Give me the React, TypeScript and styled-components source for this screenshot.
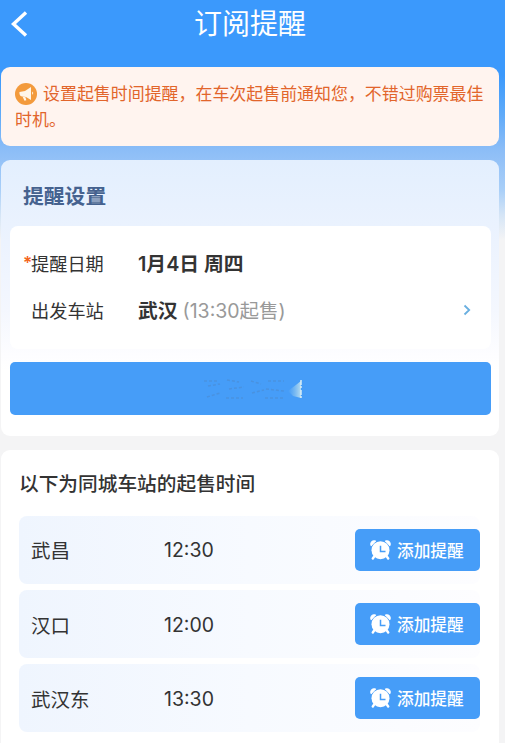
import React from "react";
import styled, { createGlobalStyle } from "styled-components";

const GlobalStyle = createGlobalStyle`
  * { box-sizing: border-box; }
  html, body { margin: 0; padding: 0; }
  body {
    background: #f4f4f5;
    color: #333;
    font-family: Inter, "Noto Sans CJK SC", sans-serif;
    overflow: hidden;
  }
  button { font: inherit; border: 0; padding: 0; margin: 0; }
`;

const Page = styled.main`
  display: flex;
  flex-direction: column;
  width: 505px;
  height: 743px;
  padding: 0 6px 0 1px;
  overflow: hidden;
  background: linear-gradient(
    180deg,
    #3b99fc 0,
    #3b99fc 75px,
    #60abf9 115px,
    #8cbdf7 150px,
    #a9cff8 190px,
    #d5e5f6 215px,
    #f4f4f5 240px
  );
`;

const Header = styled.header`
  display: grid;
  grid-template-columns: 40px 1fr 40px;
  align-items: center;
  flex: none;
  height: 47px;
  margin-bottom: 20px;
  color: #fff;
`;

const BackButton = styled.button`
  display: flex;
  padding-left: 8px;
  background: none;
  color: inherit;
`;

const Title = styled.h1`
  margin: 0;
  text-align: center;
  font-size: 28px;
  line-height: 46px;
  font-weight: 400;
`;

const Notice = styled.section`
  flex: none;
  height: 79px;
  margin-bottom: 14px;
  padding: 14px 10px 0 14px;
  border-radius: 9px;
  background: #fff4ef;
  color: #e2652b;
  font-size: 16.95px;
  line-height: 26px;
`;

const NoticeIcon = styled.svg`
  width: 22px;
  height: 22px;
  margin-right: 6px;
  vertical-align: -5px;
`;

const SettingsCard = styled.section`
  flex: none;
  height: 276px;
  margin-bottom: 14px;
  padding: 0 8px 0 9px;
  border-radius: 9px;
  background: linear-gradient(180deg, #e3effe 0, #eaf2fe 65px, #f4f7fe 150px, #fdfdff 195px, #fff 210px);
`;

const SettingsTitle = styled.h2`
  margin: 0;
  padding: 4px 0 0 13px;
  height: 66px;
  color: #45628f;
  font-size: 20.8px;
  line-height: 66px;
  font-weight: 600;
`;

const Fields = styled.div`
  height: 123px;
  margin-bottom: 13px;
  padding: 13px 20px 0 13px;
  border-radius: 8px;
  background: #fff;
`;

const Field = styled.div`
  display: grid;
  grid-template-columns: 8px 107px 1fr auto;
  align-items: center;
  height: 47px;
`;

const Required = styled.span`
  color: #f4651c;
  font-size: 17px;
  font-weight: 600;
`;

const FieldLabel = styled.span`
  font-size: 18.2px;
`;

const FieldValue = styled.span`
  font-size: 19.8px;
  font-weight: 600;
  white-space: nowrap;
`;

const SaleTime = styled.span`
  color: #999;
  font-size: 19.5px;
  font-weight: 400;
`;

const SubmitButton = styled.button`
  display: flex;
  align-items: center;
  justify-content: center;
  width: 100%;
  height: 53px;
  border-radius: 5px;
  background: #469df8;
`;

const StationsCard = styled.section`
  flex: none;
  height: 310px;
  padding: 0 19px 0 18px;
  border-radius: 9px;
  background: #fff;
`;

const StationsTitle = styled.h2`
  margin: 0;
  padding-top: 1px;
  height: 66px;
  font-size: 19.7px;
  line-height: 66px;
  font-weight: 500;
`;

const StationList = styled.ul`
  display: grid;
  gap: 6.5px;
  margin: 0;
  padding: 0;
  list-style: none;
`;

const StationRow = styled.li`
  display: grid;
  grid-template-columns: 133px 1fr 125px;
  align-items: center;
  height: 67.7px;
  padding-left: 12px;
  border-radius: 8px;
  background: linear-gradient(90deg, #eff5fe, #f7faff 50%, #fdfdff);
  font-size: 19.5px;
`;

const StationTime = styled.span`
  padding-top: 1px;
`;

const RemindButton = styled.button`
  display: flex;
  align-items: center;
  height: 42px;
  padding-left: 15px;
  gap: 6px;
  border-radius: 5px;
  background: #469df8;
  color: #fff;
  font-size: 16.7px;
  font-weight: 500;
`;

const BackIcon = () => (
  <svg width="20" height="26" viewBox="0 0 20 26" fill="none" stroke="currentColor" strokeWidth="3.400">
    <path d="M17 1.500 4.500 13 17 24.500" />
  </svg>
);

const MegaphoneIcon = () => (
  <NoticeIcon viewBox="0 0 22 22">
    <circle cx="11" cy="11" r="11" fill="#f39a3c" />
    <path d="M4.500 9 10 8l6-4v13l-5-3-5-.8c-1.300-.5-1.900-3.200-1.500-4.200Z" fill="#fff5e8" />
    <path d="m7.500 13.500 3 .7.800 3-1.800.5Z" fill="#fff5e8" />
    <path d="M17.200 8.500c1.300.5 1.300 2.700 0 3.200Z" fill="#fff5e8" />
  </NoticeIcon>
);

const ChevronIcon = () => (
  <svg width="8" height="12" viewBox="0 0 8 12" fill="none" stroke="#69afe0" strokeWidth="1.8">
    <path d="m1.500 1.500 4.700 4.500-4.700 4.500" />
  </svg>
);

const AlarmIcon = () => (
  <svg width="21" height="20" viewBox="0 0 21 20">
    <path
      d="M1.500 6C-.5 3 2.500-.3 6 1.200M19.500 6C21.500 3 18.500-.3 15 1.200"
      fill="#fff"
      stroke="#fff"
      strokeWidth="1.200"
    />
    <path d="m4.500 16-1.700 2.500M16.500 16l1.700 2.500" stroke="#fff" strokeWidth="2.400" strokeLinecap="round" />
    <circle cx="10.500" cy="10.200" r="9" fill="#fff" />
    <path d="M10.500 5.800v5.600h5" fill="none" stroke="#469df8" strokeWidth="1.500" />
  </svg>
);

/* Faint remnants of a label, ending in a bright sliver. */
const ButtonMark = () => (
  <svg width="104" height="26" viewBox="0 0 104 26" fill="none">
    <defs>
      <linearGradient id="sliver" x1="0" x2="1">
        <stop offset="0" stopColor="#8dc5e8" stopOpacity="0" />
        <stop offset="1" stopColor="#b8ddf1" />
      </linearGradient>
    </defs>
    <path
      d="M5 5h15M9 10l12-2M8 21l13-4M28 4l12 2M30 13l15-2M27 22h17M52 5l10 3M53 17l12-3M69 5h16M67 13l18 2M66 22h18"
      stroke="#4d86c4"
      strokeWidth="1.500"
      strokeDasharray="3 2"
      opacity=".45"
    />
    <path d="M89 15 102 5v17l-8-2Z" fill="url(#sliver)" />
    <path d="M102 4v18" stroke="#d7edf5" strokeWidth="1.500" strokeDasharray="5 1 2 2" />
  </svg>
);

const stations = [
  { name: "武昌", time: "12:30" },
  { name: "汉口", time: "12:00" },
  { name: "武汉东", time: "13:30" },
];

export default function App() {
  return (
    <>
      <GlobalStyle />
      <Page>
        <Header>
          <BackButton aria-label="返回">
            <BackIcon />
          </BackButton>
          <Title>订阅提醒</Title>
        </Header>
        <Notice>
          <MegaphoneIcon />
          设置起售时间提醒，在车次起售前通知您，不错过购票最佳时机。
        </Notice>
        <SettingsCard>
          <SettingsTitle>提醒设置</SettingsTitle>
          <Fields>
            <Field>
              <Required>*</Required>
              <FieldLabel>提醒日期</FieldLabel>
              <FieldValue>1月4日 周四</FieldValue>
            </Field>
            <Field>
              <span />
              <FieldLabel>出发车站</FieldLabel>
              <FieldValue>
                武汉 <SaleTime>(13:30起售)</SaleTime>
              </FieldValue>
              <ChevronIcon />
            </Field>
          </Fields>
          <SubmitButton aria-label="提交">
            <ButtonMark />
          </SubmitButton>
        </SettingsCard>
        <StationsCard>
          <StationsTitle>以下为同城车站的起售时间</StationsTitle>
          <StationList>
            {stations.map((station) => (
              <StationRow key={station.name}>
                <span>{station.name}</span>
                <StationTime>{station.time}</StationTime>
                <RemindButton>
                  <AlarmIcon />
                  添加提醒
                </RemindButton>
              </StationRow>
            ))}
          </StationList>
        </StationsCard>
      </Page>
    </>
  );
}
